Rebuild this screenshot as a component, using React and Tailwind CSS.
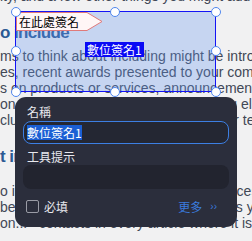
import { useState } from "react";

const bodyFont = { fontFamily: '"Liberation Sans", Arial, sans-serif' };
const cjkFont = { fontFamily: '"Noto Sans CJK TC", "Noto Sans CJK SC", sans-serif' };

const Handle = ({ x, y }) => (
  <div
    className="absolute h-[10px] w-[10px] -translate-x-1/2 -translate-y-1/2 rounded-full border-[1.5px] border-[#4f86ee] bg-white"
    style={{ left: x, top: y }}
  />
);

// document behind the signature field
const DocText = () => (
  <div className="-mt-[12px] whitespace-nowrap text-[14px] text-[#414856]" style={bodyFont}>
    <div className="h-[16px] leading-[16px]">ity, and a few other things you might add to your newsletter</div>
    <div className="mt-[14px] h-[30px] text-[17px] font-bold leading-[30px] tracking-[-0.6px] text-[#2b5a94]">
      o include
    </div>
    <div className="h-[16px] leading-[16px]">ms to think about including might be introductions</div>
    <div className="h-[16px] leading-[16px]">es, recent awards presented to your company</div>
    <div className="h-[16px] leading-[16px]">s on products or services, announcements</div>
    <div className="h-[16px] leading-[16px]">on of new staff members and anything else you</div>
    <div className="h-[16px] leading-[16px]">clude anything that would interest your team o or</div>
    <div className="mt-[14px] h-[30px] text-[17px] font-bold leading-[30px] tracking-[-0.6px] text-[#2b5a94]">
      t include
    </div>
    <div className="mt-[11px] h-[16px] leading-[16px]">o include the names of people and places that</div>
    <div className="h-[16px] leading-[16px]">be sure to verify spellings of the names you should</div>
    <div className="h-[16px] leading-[16px]">on...&nbsp;&nbsp; contacts in every article where it is a</div>
  </div>
);

const Popup = () => {
  const [required, setRequired] = useState(false);
  return (
    <div
      className="absolute left-[15px] top-[97px] flex w-[222px] flex-col rounded-[11px] bg-[#2b2e3c] px-[8px] pb-[14px] pt-[7px] text-[12px] text-[#e8e9ee]"
      style={cjkFont}
    >
      <div className="px-[4px] leading-[16px]">名稱</div>
      <div className="mt-[1px] flex h-[23px] items-center rounded-[8px] border-[1.5px] border-[#3c7fe3] bg-[#242733] px-[3px]">
        <span className="bg-[#1b5fd4] leading-[15px] text-white">數位簽名1</span>
      </div>
      <div className="mt-[5px] px-[4px] leading-[16px]">工具提示</div>
      <div className="h-[24px] rounded-[8px] bg-[#22242f]" />
      <div className="mt-[11px] flex h-[13px] items-center px-[3px]">
        <button
          onClick={() => setRequired((r) => !r)}
          className="h-[13px] w-[13px] rounded-[2px] border border-[#9a9ca6]"
        />
        <span className="ml-[5px] leading-[13px]">必填</span>
        <span className="ml-auto mr-[9px] flex items-center gap-[8px] text-[#3a7bdc]">
          更多
          <span className="text-[10px]" style={bodyFont}>››</span>
        </span>
      </div>
    </div>
  );
};

export default function App() {
  return (
    <div className="relative h-[241px] w-[252px] overflow-hidden bg-[#f1f1f2]">
      <DocText />

      {/* signature field */}
      <div className="absolute left-[15px] top-[11px] h-[81px] w-[201px] border-[1.5px] border-[#1414f5] bg-[rgba(100,150,240,0.3)]" />

      {/* "sign here" flag */}
      <div className="absolute left-[16px] top-[12px] h-[19px] w-[87px]">
        <svg width="87" height="19" viewBox="0 0 87 19" className="absolute inset-0">
          <polygon points="0.5,0.5 71,0.5 86,9.5 71,18.5 0.5,18.5" fill="#fff6f6" stroke="#e07a7a" />
        </svg>
        <span className="relative block pl-[3px] text-[12px] leading-[19px] text-black" style={cjkFont}>
          在此處簽名
        </span>
      </div>

      <div
        className="absolute left-[85px] top-[42px] h-[15px] bg-[#0a0af5] px-[2px] text-[12px] leading-[15px] text-white"
        style={cjkFont}
      >
        數位簽名1
      </div>

      <Handle x={15.5} y={11.5} />
      <Handle x={115} y={11.5} />
      <Handle x={215.5} y={11.5} />
      <Handle x={15.5} y={51} />
      <Handle x={215.5} y={51} />
      <Handle x={15.5} y={91.5} />
      <Handle x={115} y={91.5} />
      <Handle x={215.5} y={91.5} />

      <Popup />
    </div>
  );
}
